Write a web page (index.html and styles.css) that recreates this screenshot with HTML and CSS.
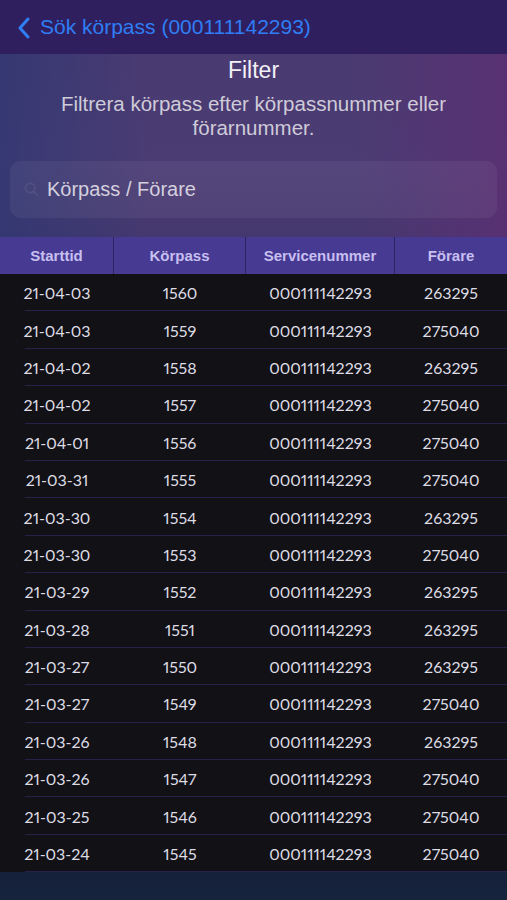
FILE: index.html
```html
<!DOCTYPE html>
<html lang="sv">
<head>
<meta charset="utf-8">
<link rel="stylesheet" href="styles.css">
</head>
<body>
<div class="screen">
  <header class="nav">
    <svg class="chev" width="14" height="22" viewBox="0 0 14 22"><path d="M11 2 L3 11 L11 20" fill="none" stroke="#2f7ef5" stroke-width="3" stroke-linecap="round" stroke-linejoin="round"/></svg>
    <span class="nav-title">Sök körpass (000111142293)</span>
  </header>
  <section class="filter">
    <h1 class="filter-title">Filter</h1>
    <p class="filter-desc">Filtrera körpass efter körpassnummer eller förarnummer.</p>
    <div class="search">
      <svg class="search-icon" width="15" height="15" viewBox="0 0 16 16"><circle cx="6.5" cy="6.5" r="5" fill="none" stroke="rgba(255,255,255,0.07)" stroke-width="2"/><path d="M10.5 10.5 L14.5 14.5" stroke="rgba(255,255,255,0.07)" stroke-width="2" stroke-linecap="round"/></svg>
      <span class="search-ph">Körpass / Förare</span>
    </div>
  </section>
  <div class="thead">
    <div class="th c1">Starttid</div>
    <div class="th c2">Körpass</div>
    <div class="th c3">Servicenummer</div>
    <div class="th c4">Förare</div>
  </div>
  <div class="tbody">
    <div class="row"><span class="c1">21-04-03</span><span class="c2">1560</span><span class="c3">000111142293</span><span class="c4">263295</span></div>
    <div class="row"><span class="c1">21-04-03</span><span class="c2">1559</span><span class="c3">000111142293</span><span class="c4">275040</span></div>
    <div class="row"><span class="c1">21-04-02</span><span class="c2">1558</span><span class="c3">000111142293</span><span class="c4">263295</span></div>
    <div class="row"><span class="c1">21-04-02</span><span class="c2">1557</span><span class="c3">000111142293</span><span class="c4">275040</span></div>
    <div class="row"><span class="c1">21-04-01</span><span class="c2">1556</span><span class="c3">000111142293</span><span class="c4">275040</span></div>
    <div class="row"><span class="c1">21-03-31</span><span class="c2">1555</span><span class="c3">000111142293</span><span class="c4">275040</span></div>
    <div class="row"><span class="c1">21-03-30</span><span class="c2">1554</span><span class="c3">000111142293</span><span class="c4">263295</span></div>
    <div class="row"><span class="c1">21-03-30</span><span class="c2">1553</span><span class="c3">000111142293</span><span class="c4">275040</span></div>
    <div class="row"><span class="c1">21-03-29</span><span class="c2">1552</span><span class="c3">000111142293</span><span class="c4">263295</span></div>
    <div class="row"><span class="c1">21-03-28</span><span class="c2">1551</span><span class="c3">000111142293</span><span class="c4">263295</span></div>
    <div class="row"><span class="c1">21-03-27</span><span class="c2">1550</span><span class="c3">000111142293</span><span class="c4">263295</span></div>
    <div class="row"><span class="c1">21-03-27</span><span class="c2">1549</span><span class="c3">000111142293</span><span class="c4">275040</span></div>
    <div class="row"><span class="c1">21-03-26</span><span class="c2">1548</span><span class="c3">000111142293</span><span class="c4">263295</span></div>
    <div class="row"><span class="c1">21-03-26</span><span class="c2">1547</span><span class="c3">000111142293</span><span class="c4">275040</span></div>
    <div class="row"><span class="c1">21-03-25</span><span class="c2">1546</span><span class="c3">000111142293</span><span class="c4">275040</span></div>
    <div class="row"><span class="c1">21-03-24</span><span class="c2">1545</span><span class="c3">000111142293</span><span class="c4">275040</span></div>
  </div>
  <div class="footer"></div>
</div>
</body>
</html>
```

FILE: styles.css
```css
* { box-sizing: border-box; }
html, body { margin: 0; padding: 0; background: #111116; }
body { font-family: "Liberation Sans", Arial, sans-serif; }
.screen { width: 507px; height: 900px; display: flex; flex-direction: column; overflow: hidden; }

.nav {
  height: 54px; background: #2f1f5e;
  display: flex; align-items: center; padding-left: 17px; gap: 9px;
}
.chev { margin-top: 1px; }
.nav-title { color: #2f7ef5; font-size: 21px; font-family: "Liberation Sans", Arial, sans-serif; }

.filter {
  height: 183px;
  background:
    linear-gradient(90deg, rgba(40,55,115,0.6) 0%, rgba(80,60,115,0) 30%, rgba(85,55,120,0) 70%, rgba(95,45,115,0.7) 100%),
    linear-gradient(180deg, #4a3a72 0%, #4b3c74 60%, #45386f 100%);
  display: flex; flex-direction: column; align-items: center;
  padding-top: 2px;
}
.filter-title { margin: 0; color: #f2f0f6; font-weight: normal; font-size: 23px; line-height: 28px; }
.filter-desc {
  margin: 8px 0 0; width: 470px; text-align: center;
  color: #cfcbd8; font-size: 20.5px; line-height: 24px;
}
.search {
  margin-top: 21px; width: 487px; height: 57px; border-radius: 11px;
  background: rgba(255,255,255,0.055);
  display: flex; align-items: center; padding-left: 14px; gap: 8px;
}
.search-ph { color: #d4d0de; font-size: 20px; }

.thead { height: 37px; display: flex; background: #473a93; }
.th {
  display: flex; align-items: center; justify-content: center;
  color: #c7bff0; font-weight: bold; font-size: 15px;
  font-family: "Liberation Sans", Arial, sans-serif;
  border-right: 1px solid #2e2560;
}
.th.c4 { border-right: none; }
.c1 { width: 114px; }
.c2 { width: 132px; }
.c3 { width: 149px; }
.c4 { width: 112px; }

.tbody { background: #111116; }
.row {
  height: 37.4px; display: flex; align-items: center; position: relative;
  color: #dedce4; font-family: Lato, "Open Sans", sans-serif; font-size: 16px;
  font-variant-numeric: proportional-nums;
}
.row span { text-align: center; }
.row::after {
  content: ""; position: absolute; left: 25px; right: 0; bottom: 0; height: 1px;
  background: #25234a;
}
.footer { flex: 1; background: linear-gradient(180deg, #15203a 0%, #16243c 100%); }
```
